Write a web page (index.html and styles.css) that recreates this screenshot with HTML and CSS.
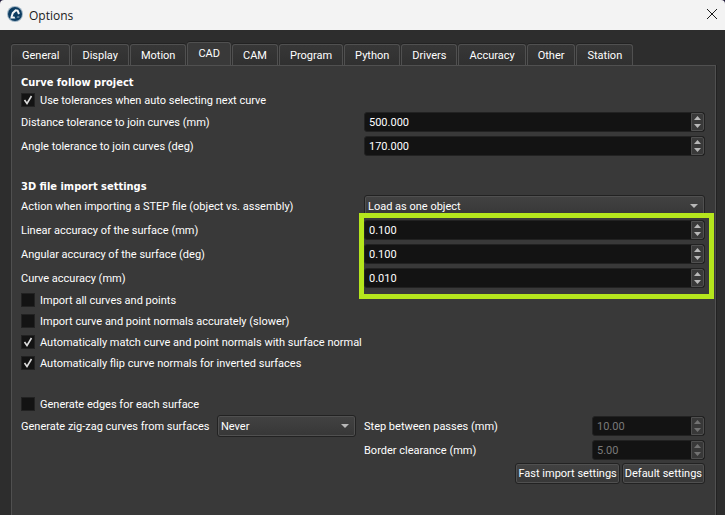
FILE: index.html
```html
<!DOCTYPE html>
<html lang="en">
  <head>
    <meta charset="UTF-8" />
    <meta name="viewport" content="width=device-width, initial-scale=1.0" />
    <title>Options</title>
    <link rel="stylesheet" href="styles.css">
  </head>
  <body>
    <header class="titlebar">
      <svg class="logo" viewBox="0 0 16 16" aria-hidden="true">
        <circle cx="8" cy="8" r="8" fill="#9fb4c4" />
        <circle cx="8" cy="8" r="7" fill="#0c3c61" />
        <path d="M4.5 11 L5.8 7 L8.6 4.4 L10.6 4.6 L12 8" fill="none" stroke="#f2f5f7" stroke-width="2" />
        <path d="M3 12.4 L4 10.4 L7.4 10.4 L8.4 12.4 Z" fill="#f2f5f7" />
        <path d="M9.6 11.6 L10.4 10.4 L12.4 10.4 L12.4 11.6 Z" fill="#9fb4c4" />
      </svg>
      <h1>Options</h1>
      <button class="close" type="button" aria-label="Close">
        <svg viewBox="0 0 10 10"><path d="M0 0 L10 10 M10 0 L0 10" stroke="#1a1a1a" /></svg>
      </button>
    </header>

    <main class="dialog">
      <nav class="tabs" role="tablist">
        <button class="tab" role="tab" type="button">General</button>
        <button class="tab" role="tab" type="button">Display</button>
        <button class="tab" role="tab" type="button">Motion</button>
        <button class="tab active" role="tab" type="button" aria-selected="true">CAD</button>
        <button class="tab" role="tab" type="button">CAM</button>
        <button class="tab" role="tab" type="button">Program</button>
        <button class="tab" role="tab" type="button">Python</button>
        <button class="tab" role="tab" type="button">Drivers</button>
        <button class="tab" role="tab" type="button">Accuracy</button>
        <button class="tab" role="tab" type="button">Other</button>
        <button class="tab" role="tab" type="button">Station</button>
      </nav>

      <form class="panel">
        <section class="group">
          <h2>Curve follow project</h2>
          <label class="check"><input type="checkbox" checked />Use tolerances when auto selecting next curve</label>
          <div class="rows">
            <div class="row">
              <label for="distance">Distance tolerance to join curves (mm)</label>
              <div class="spin">
                <input type="text" id="distance" value="500.000" />
                <div class="arrows">
                  <button type="button" class="up" aria-label="Increase"></button>
                  <button type="button" class="down" aria-label="Decrease"></button>
                </div>
              </div>
            </div>
            <div class="row">
              <label for="angle">Angle tolerance to join curves (deg)</label>
              <div class="spin">
                <input type="text" id="angle" value="170.000" />
                <div class="arrows">
                  <button type="button" class="up" aria-label="Increase"></button>
                  <button type="button" class="down" aria-label="Decrease"></button>
                </div>
              </div>
            </div>
          </div>
        </section>

        <section class="group">
          <h2>3D file import settings</h2>
          <div class="row">
            <label for="step">Action when importing a STEP file (object vs. assembly)</label>
            <select id="step"><option>Load as one object</option></select>
          </div>
          <div class="rows highlighted">
            <div class="row">
              <label for="linear">Linear accuracy of the surface (mm)</label>
              <div class="spin">
                <input type="text" id="linear" value="0.100" />
                <div class="arrows">
                  <button type="button" class="up" aria-label="Increase"></button>
                  <button type="button" class="down" aria-label="Decrease"></button>
                </div>
              </div>
            </div>
            <div class="row">
              <label for="angular">Angular accuracy of the surface (deg)</label>
              <div class="spin">
                <input type="text" id="angular" value="0.100" />
                <div class="arrows">
                  <button type="button" class="up" aria-label="Increase"></button>
                  <button type="button" class="down" aria-label="Decrease"></button>
                </div>
              </div>
            </div>
            <div class="row">
              <label for="curve">Curve accuracy (mm)</label>
              <div class="spin">
                <input type="text" id="curve" value="0.010" />
                <div class="arrows">
                  <button type="button" class="up" aria-label="Increase"></button>
                  <button type="button" class="down" aria-label="Decrease"></button>
                </div>
              </div>
            </div>
          </div>
          <div class="checks">
            <label class="check"><input type="checkbox" />Import all curves and points</label>
            <label class="check"><input type="checkbox" />Import curve and point normals accurately (slower)</label>
            <label class="check"><input type="checkbox" checked />Automatically match curve and point normals with surface normal</label>
            <label class="check"><input type="checkbox" checked />Automatically flip curve normals for inverted surfaces</label>
          </div>
        </section>

        <section class="group">
          <label class="check"><input type="checkbox" />Generate edges for each surface</label>
          <div class="zigzag">
            <div class="pair method">
              <label for="zigzag">Generate zig-zag curves from surfaces</label>
              <select id="zigzag"><option>Never</option></select>
            </div>
            <div class="rows">
              <div class="pair">
                <label for="passes">Step between passes (mm)</label>
                <div class="spin small">
                  <input type="text" id="passes" value="10.00" disabled />
                  <div class="arrows">
                    <button type="button" class="up" aria-label="Increase" disabled></button>
                    <button type="button" class="down" aria-label="Decrease" disabled></button>
                  </div>
                </div>
              </div>
              <div class="pair">
                <label for="border">Border clearance (mm)</label>
                <div class="spin small">
                  <input type="text" id="border" value="5.00" disabled />
                  <div class="arrows">
                    <button type="button" class="up" aria-label="Increase" disabled></button>
                    <button type="button" class="down" aria-label="Decrease" disabled></button>
                  </div>
                </div>
              </div>
            </div>
          </div>
          <div class="actions">
            <button class="btn" type="button">Fast import settings</button>
            <button class="btn" type="button">Default settings</button>
          </div>
        </section>
      </form>
    </main>
  </body>
</html>
```
FILE: styles.css
```css
* {
  box-sizing: border-box;
}

html {
  background: #1c1535;
}

body {
  margin: 0;
  min-height: 100vh;
  display: flex;
  flex-direction: column;
  font-family: Roboto, sans-serif;
  font-size: 11px;
  line-height: 18px;
  color: #fff;
}

button,
input,
select {
  font: inherit;
  color: inherit;
  margin: 0;
}

.titlebar {
  display: flex;
  align-items: center;
  gap: 6px;
  height: 30px;
  padding: 0 8px 2px 7px;
  background: #f3f3f3;
  border-radius: 4px 4px 0 0;
  color: #1a1a1a;
}

.titlebar h1 {
  flex: 1;
  margin: 0;
  padding-top: 2px;
  font: 12px "Open Sans", sans-serif;
}

.logo {
  width: 16px;
  height: 16px;
}

.close {
  display: flex;
  padding: 0;
  border: 0;
  background: none;
}

.close svg {
  width: 10px;
  height: 10px;
}

.dialog {
  flex: 1;
  display: flex;
  flex-direction: column;
  padding: 12px 9px 0 11px;
  background: #2d2d2d;
}

/* tabs */
.tabs {
  display: flex;
  align-items: flex-end;
  gap: 1px;
}

.tab {
  height: 21px;
  padding: 1px 10px 0;
  border: 1px solid #505050;
  border-bottom: 0;
  border-radius: 3px 3px 0 0;
  background: linear-gradient(#373737, #303030);
  box-shadow: 0 -1px #222;
}

.tab.active {
  height: 24px;
  padding-bottom: 2px;
  margin-bottom: -1px;
  background: #393939;
}

.panel {
  flex: 1;
  padding: 7px 10px 0 9px;
  border: 1px solid #505050;
  border-bottom: 0;
  box-shadow: 1px 0 #222;
  background: #393939;
  background-clip: padding-box;
}

.group {
  margin-bottom: 23px;
}

.group:first-child {
  margin-bottom: 21px;
}

.group h2 {
  margin: 0;
  padding-top: 2px;
  font-family: "DejaVu Sans Condensed", "DejaVu Sans", sans-serif;
  font-stretch: condensed;
  font-size: 11px;
  line-height: 16px;
}

.rows {
  display: flex;
  flex-direction: column;
  gap: 4px;
  margin-top: 3px;
}

.row {
  display: grid;
  grid-template-columns: 1fr 1fr;
  column-gap: 2px;
  align-items: center;
}

.row label,
.pair label {
  padding-top: 2px;
}

.highlighted {
  position: relative;
}

.highlighted::after {
  content: "";
  position: absolute;
  top: -7px;
  right: -9px;
  bottom: -11px;
  left: calc(50% - 4px);
  border: 5px solid #b5e61d;
  pointer-events: none;
}

/* controls */
.spin {
  display: flex;
  height: 20px;
  border: 1px solid #222;
  border-radius: 3px;
  background: #131313;
  overflow: hidden;
}

.spin input {
  flex: 1;
  min-width: 0;
  padding: 2px 4px 0;
  border: 0;
  background: none;
}

.spin.small {
  width: 113px;
}

.spin input:disabled {
  color: #7a7a7a;
}

.arrows {
  display: flex;
  flex-direction: column;
  width: 13px;
  border: 1px solid #505050;
  border-radius: 0 2px 2px 0;
  background: #393939;
}

.arrows button {
  flex: 1;
  padding: 0;
  border: 0;
  background: center no-repeat;
}

.arrows .up {
  background-image: url("data:image/svg+xml,%3Csvg xmlns='http://www.w3.org/2000/svg' width='7' height='4'%3E%3Cpath d='M0 4 L3.5 0 L7 4Z' fill='%23b8b8b8'/%3E%3C/svg%3E");
}

.arrows .down {
  background-image: url("data:image/svg+xml,%3Csvg xmlns='http://www.w3.org/2000/svg' width='7' height='4'%3E%3Cpath d='M0 0 L3.5 4 L7 0Z' fill='%23b8b8b8'/%3E%3C/svg%3E");
}

.arrows button:disabled {
  opacity: 0.45;
}

select {
  appearance: none;
  height: 22px;
  padding: 2px 20px 0 3px;
  border: 1px solid #222;
  border-radius: 3px;
  background: url("data:image/svg+xml,%3Csvg xmlns='http://www.w3.org/2000/svg' width='8' height='4'%3E%3Cpath d='M0 0 L4 4 L8 0Z' fill='%23b8b8b8'/%3E%3C/svg%3E") right 6px center no-repeat, linear-gradient(#424242, #373737);
  box-shadow: inset 0 0 0 1px #505050;
}

.check {
  display: flex;
  align-items: center;
  gap: 5px;
  height: 18px;
  padding-top: 2px;
}

.check input {
  appearance: none;
  width: 14px;
  height: 14px;
  margin-bottom: 2px;
  border: 1px solid #222;
  background: #131313 center no-repeat;
}

.check input:checked {
  background-image: url("data:image/svg+xml,%3Csvg xmlns='http://www.w3.org/2000/svg' width='10' height='10'%3E%3Cpath d='M1.5 5 L4 8.5 L8.5 1' fill='none' stroke='%23ddd' stroke-width='1.6'/%3E%3C/svg%3E");
}

.checks {
  display: flex;
  flex-direction: column;
  gap: 3px;
  margin-top: 3px;
}

.zigzag {
  display: grid;
  grid-template-columns: 1fr 1fr;
  align-items: start;
  column-gap: 2px;
  margin-top: 2px;
}

.zigzag .rows {
  margin-top: 1px;
}

.pair {
  display: flex;
  align-items: center;
  justify-content: space-between;
}

.pair select {
  width: 139px;
}

.method {
  padding-right: 6px;
}

.actions {
  display: flex;
  justify-content: flex-end;
  gap: 2px;
  margin-top: 3px;
}

.btn {
  height: 21px;
  padding: 1px 2px 0;
  border: 1px solid #222;
  border-radius: 3px;
  background: linear-gradient(#424242, #373737);
  box-shadow: inset 0 0 0 1px #505050;
}
```
